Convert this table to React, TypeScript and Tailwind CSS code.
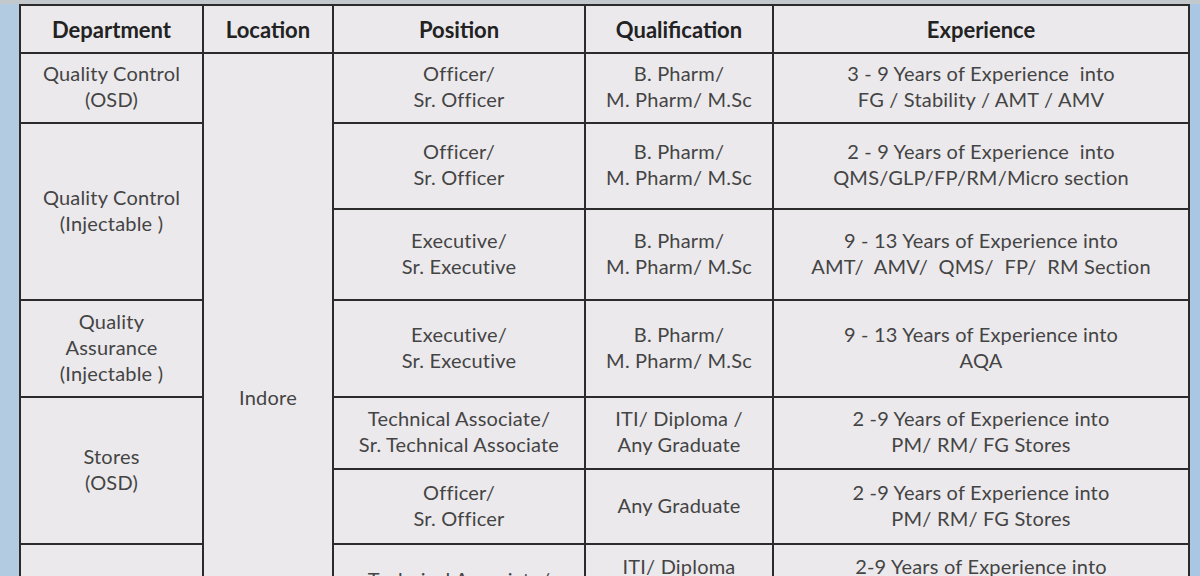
import React from 'react';

type Cell = { lines: string[]; rowSpan?: number };
type Row = { h: string; dept?: Cell; loc?: Cell; pos: Cell; qual: Cell; exp: Cell };

const rows: Row[] = [
  {
    h: 'h-[70px]',
    dept: { lines: ['Quality Control', '(OSD)'] },
    loc: { lines: ['Indore'], rowSpan: 8 },
    pos: { lines: ['Officer/', 'Sr. Officer'] },
    qual: { lines: ['B. Pharm/', 'M. Pharm/ M.Sc'] },
    exp: { lines: ['3 - 9 Years of Experience  into', 'FG / Stability / AMT / AMV'] },
  },
  {
    h: 'h-[86px]',
    dept: { lines: ['Quality Control', '(Injectable )'], rowSpan: 2 },
    pos: { lines: ['Officer/', 'Sr. Officer'] },
    qual: { lines: ['B. Pharm/', 'M. Pharm/ M.Sc'] },
    exp: { lines: ['2 - 9 Years of Experience  into', 'QMS/GLP/FP/RM/Micro section'] },
  },
  {
    h: 'h-[91px]',
    pos: { lines: ['Executive/', 'Sr. Executive'] },
    qual: { lines: ['B. Pharm/', 'M. Pharm/ M.Sc'] },
    exp: { lines: ['9 - 13 Years of Experience into', 'AMT/  AMV/  QMS/  FP/  RM Section'] },
  },
  {
    h: 'h-[97px]',
    dept: { lines: ['Quality', 'Assurance', '(Injectable )'] },
    pos: { lines: ['Executive/', 'Sr. Executive'] },
    qual: { lines: ['B. Pharm/', 'M. Pharm/ M.Sc'] },
    exp: { lines: ['9 - 13 Years of Experience into', 'AQA'] },
  },
  {
    h: 'h-[72px]',
    dept: { lines: ['Stores', '(OSD)'], rowSpan: 2 },
    pos: { lines: ['Technical Associate/', 'Sr. Technical Associate'] },
    qual: { lines: ['ITI/ Diploma /', 'Any Graduate'] },
    exp: { lines: ['2 -9 Years of Experience into', 'PM/ RM/ FG Stores'] },
  },
  {
    h: 'h-[75px]',
    pos: { lines: ['Officer/', 'Sr. Officer'] },
    qual: { lines: ['Any Graduate'] },
    exp: { lines: ['2 -9 Years of Experience into', 'PM/ RM/ FG Stores'] },
  },
  {
    h: 'h-[100px]',
    dept: { lines: ['Stores', '(Injectable)'], rowSpan: 2 },
    pos: { lines: ['Technical Associate/', 'Sr. Technical Associate'] },
    qual: { lines: ['ITI/ Diploma', '/ Any', 'Graduate'] },
    exp: { lines: ['2-9 Years of Experience into', 'PM/ RM/ FG Stores', 'Dispensing'] },
  },
  {
    h: 'h-[100px]',
    pos: { lines: ['Officer/', 'Sr. Officer'] },
    qual: { lines: ['Any Graduate'] },
    exp: { lines: ['2 -9 Years of Experience into', 'PM/ RM/ FG Stores'] },
  },
];

const cellCls =
  'border-2 border-[#2b2b2b] pb-[4px] text-center align-middle text-[20px] leading-[26px] tracking-[0.2px] text-[#444444] whitespace-pre';

const Td: React.FC<{ cell: Cell }> = ({ cell }) => (
  <td rowSpan={cell.rowSpan} className={cellCls}>
    {cell.lines.map((l, i) => (
      <div key={i}>{l}</div>
    ))}
  </td>
);

const headers = ['Department', 'Location', 'Position', 'Qualification', 'Experience'];

const App: React.FC = () => {
  return (
    <div
      className="h-[576px] w-[1200px] overflow-hidden bg-gradient-to-r from-[#b2cbe0] via-[#c9d6df] to-[#a9c7e4]"
      style={{ fontFamily: 'Lato, "Open Sans", sans-serif' }}
    >
      <div className="h-[4px] bg-[#c2c8cc]" />
      <div className="pl-[19px]">
        <table className="w-[1169px] table-fixed border-collapse bg-[#ebe9ec]">
          <colgroup>
            <col className="w-[183px]" />
            <col className="w-[130px]" />
            <col className="w-[252px]" />
            <col className="w-[188px]" />
            <col className="w-[416px]" />
          </colgroup>
          <thead>
            <tr className="h-[48px]">
              {headers.map((h) => (
                <th
                  key={h}
                  className="border-2 border-[#2b2b2b] text-center align-middle text-[22px] font-bold text-[#222222]"
                >
                  {h}
                </th>
              ))}
            </tr>
          </thead>
          <tbody>
            {rows.map((r, i) => (
              <tr key={i} className={r.h}>
                {r.dept && <Td cell={r.dept} />}
                {r.loc && <Td cell={r.loc} />}
                <Td cell={r.pos} />
                <Td cell={r.qual} />
                <Td cell={r.exp} />
              </tr>
            ))}
          </tbody>
        </table>
      </div>
    </div>
  );
};

export default App;
